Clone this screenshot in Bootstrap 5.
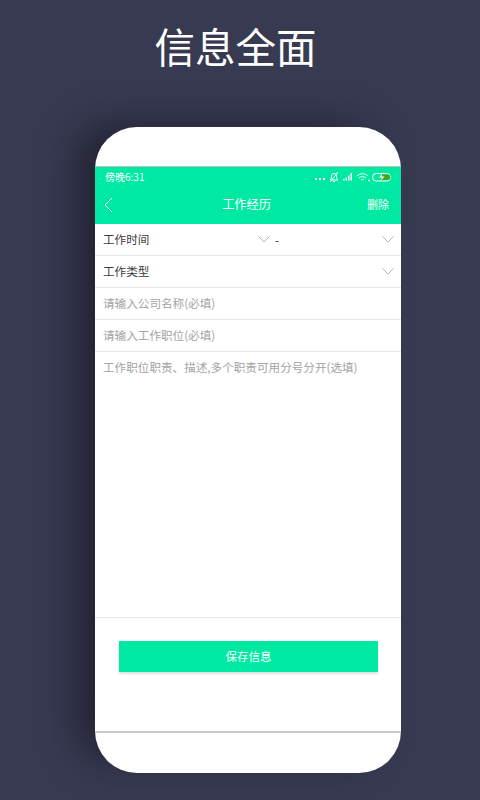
<!DOCTYPE html>
<html lang="zh-CN">
<head>
<meta charset="utf-8">
<title>信息全面</title>
<link rel="stylesheet" href="https://cdn.jsdelivr.net/npm/bootstrap@5.3.0/dist/css/bootstrap.min.css">
<style>
html,body{height:800px;overflow:hidden}
body{width:480px;background:#383a52;font-family:"Noto Sans CJK SC","Liberation Sans",sans-serif}
.stage{height:800px;padding-top:18px}
.headline{height:109px;width:471px;font-size:40.5px;line-height:56px;font-weight:400;color:#fff;margin:0}
.phone{width:306px;height:646px;margin-left:95px;border-radius:42px;overflow:hidden;background:#fff;box-shadow:-24px -8px 36px -6px rgba(14,14,22,.55)}
.bezel-top{height:39px}
.appbar{height:58px;background:#00e9a2;border-top:1px solid #b9c2bf;color:#fff}
.statusrow{height:19px;padding:0 10px;font-size:10px;line-height:19px}
.titlerow{height:37px;padding:0 12px 0 9px;font-size:11px}
.edge{width:40px}
.ttl{font-size:12.2px}
.formrow{height:32px;padding:0 7px 0 8px;border-bottom:1px solid #e9e9e9;font-size:11.6px;color:#3c3c3c}
.formrow.hint{color:#a3a3a3}
.half{width:167px}
.dash{margin-left:5px;font-size:12px}
.notes{height:266px;padding:7px 8px;border-bottom:1px solid #e9e9e9;font-size:11.6px;line-height:16px;color:#a3a3a3}
.savezone{height:115px;padding:23px 23px 0 24px;border-bottom:2px solid #c8c8c8}
.savebtn{width:259px;height:31px;padding:0;border:0;border-radius:0;background:#00e9a2;color:#fff;font-size:11.5px;box-shadow:0 2px 2px rgba(0,0,0,.13)}
.savebtn:hover{background:#00e9a2;color:#fff}
</style>
</head>
<body>
<div class="stage">
  <h1 class="headline text-center">信息全面</h1>
  <div class="phone">
    <div class="bezel-top"></div>
    <div class="appbar">
      <div class="statusrow d-flex justify-content-between align-items-center">
        <span>傍晚6:31</span>
        <svg width="76" height="12" viewBox="0 0 76 12" fill="none" stroke="#fff" stroke-width="1">
          <g fill="#fff" stroke="none"><rect x="0" y="7" width="2" height="2"/><rect x="4" y="7" width="2" height="2"/><rect x="8" y="7" width="2" height="2"/></g>
          <path d="M15 9h8c-1.200-1-1.500-2-1.500-4 0-1.500-1-2.500-2.500-2.500S16.500 3.500 16.500 5c0 2-.3 3-1.500 4zM18 10.500h2M15.500 10.500 23 1"/>
          <g fill="#fff" stroke="none"><rect x="28" y="8" width="1.500" height="1.500"/><rect x="30.500" y="6.500" width="1.500" height="3"/><rect x="33" y="4.500" width="1.500" height="5"/><rect x="35.500" y="2" width="1.500" height="7.500"/></g>
          <path d="M42 5c3-3 8-3 11 0M44 7c2-1.800 5-1.800 7 0M46 9c1-.8 2-.8 3 0"/>
          <circle cx="54" cy="9.500" r="1" fill="#fff" stroke="none"/>
          <rect x="57.500" y="2.500" width="18" height="7.500" rx="3.700"/>
          <path d="M67 3.500h5.500a2.700 2.700 0 0 1 0 5.500H65z" fill="#3fa81d" stroke="none"/>
          <path d="M67.500 2 64 6.500h3L65 10.500 69.500 5.500h-3z" fill="#fff" stroke="none"/>
        </svg>
      </div>
      <div class="titlerow d-flex justify-content-between align-items-center">
        <span class="edge"><svg class="d-block" width="9" height="16" viewBox="0 0 9 16" fill="none" stroke="#fff" stroke-width="1"><path d="M8 1 1 8l7 7"/></svg></span>
        <span class="ttl">工作经历</span>
        <span class="edge text-end">删除</span>
      </div>
    </div>
    <div class="formrow d-flex align-items-center">
      <div class="half d-flex justify-content-between align-items-center">
        <span>工作时间</span>
        <svg width="12" height="7" viewBox="0 0 12 7" fill="none" stroke="#b5b5b5" stroke-width="1"><path d="m.5.500 5.500 5.500L11.500.500"/></svg>
      </div>
      <span class="dash">-</span>
      <svg class="ms-auto" width="12" height="7" viewBox="0 0 12 7" fill="none" stroke="#b5b5b5" stroke-width="1"><path d="m.5.500 5.500 5.500L11.500.500"/></svg>
    </div>
    <div class="formrow d-flex justify-content-between align-items-center">
      <span>工作类型</span>
      <svg width="12" height="7" viewBox="0 0 12 7" fill="none" stroke="#b5b5b5" stroke-width="1"><path d="m.5.500 5.500 5.500L11.500.500"/></svg>
    </div>
    <div class="formrow hint d-flex align-items-center">请输入公司名称(必填)</div>
    <div class="formrow hint d-flex align-items-center">请输入工作职位(必填)</div>
    <div class="notes">工作职位职责、描述,多个职责可用分号分开(选填)</div>
    <div class="savezone">
      <button type="button" class="btn savebtn">保存信息</button>
    </div>
  </div>
</div>
<script src="https://cdn.jsdelivr.net/npm/bootstrap@5.3.0/dist/js/bootstrap.bundle.min.js"></script>
</body>
</html>
